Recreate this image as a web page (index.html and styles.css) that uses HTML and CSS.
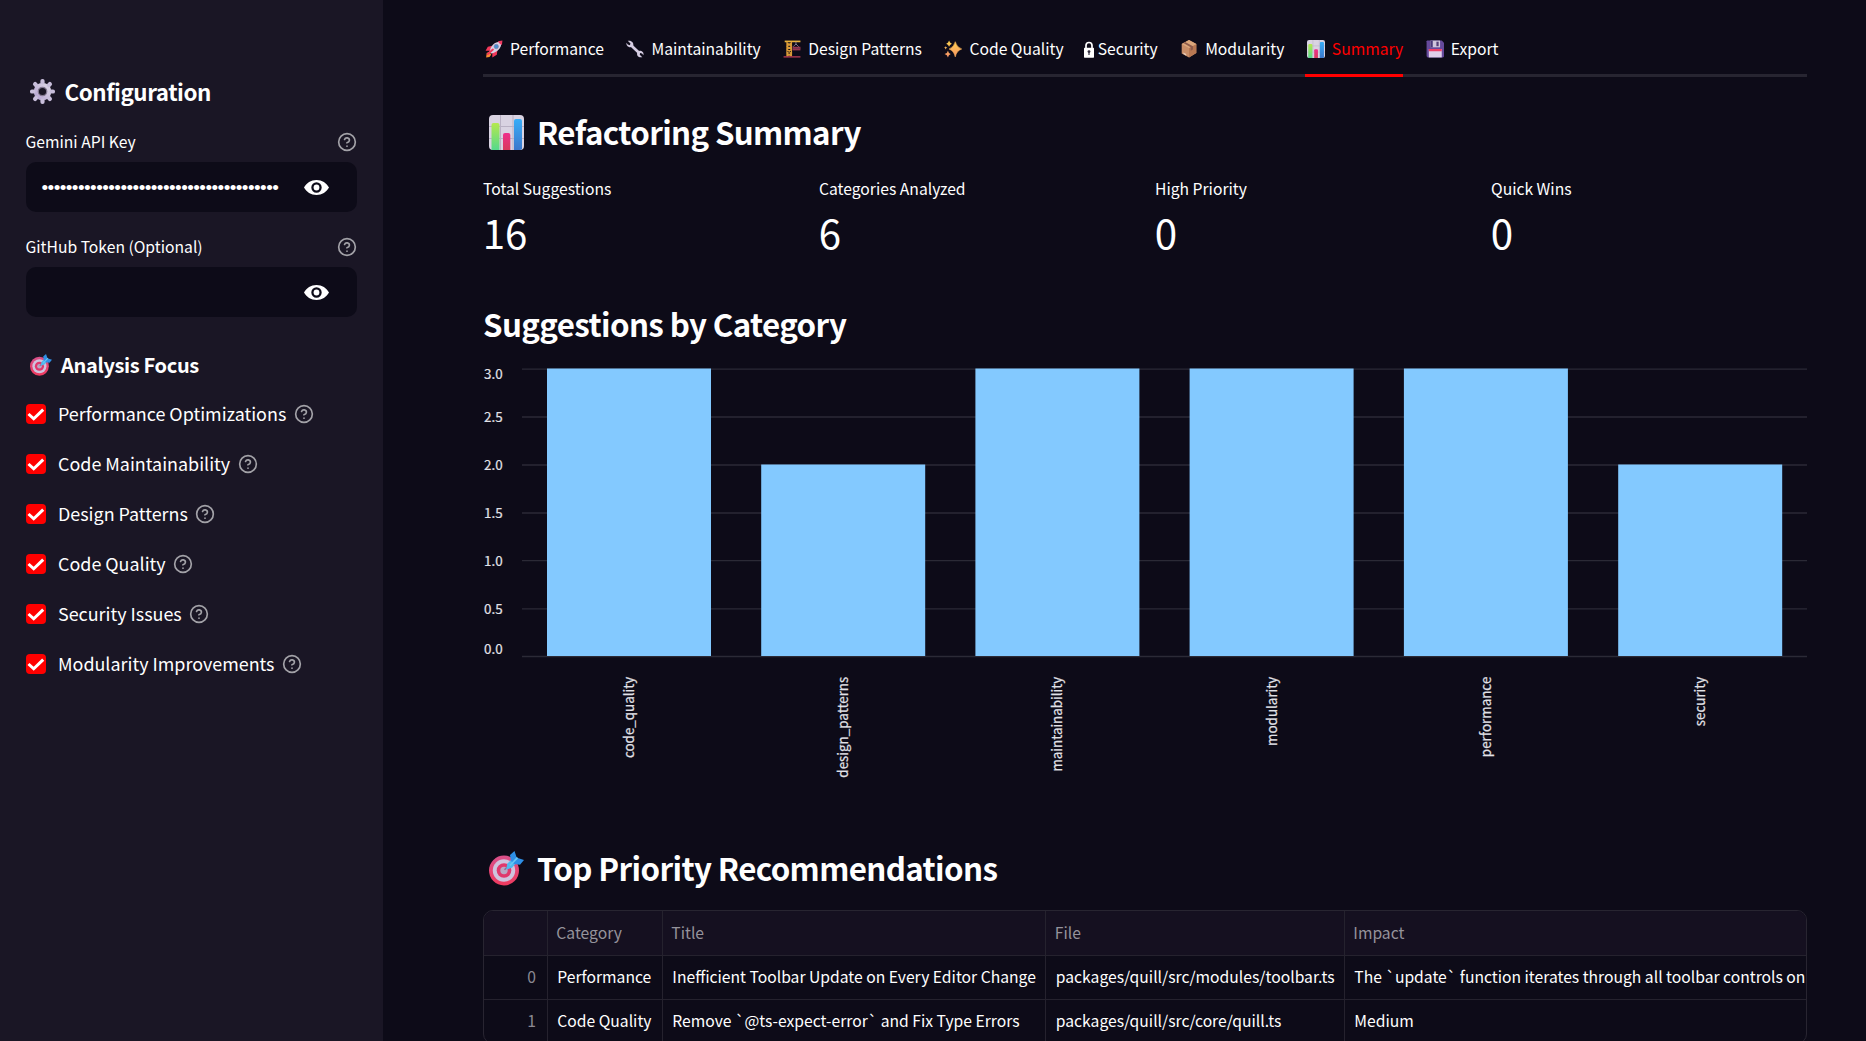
FILE: index.html
```html
<!DOCTYPE html>
<html lang="en">
<head>
<meta charset="utf-8">
<title>Refactoring Summary</title>
<link rel="stylesheet" href="styles.css">
</head>
<body>
<svg class="defs" width="0" height="0" aria-hidden="true">
  <defs>
    <linearGradient id="gGreen" x1="0" y1="0" x2="0" y2="1"><stop offset="0" stop-color="#b5e84e"/><stop offset="1" stop-color="#55d98c"/></linearGradient>
    <linearGradient id="gPink" x1="0" y1="0" x2="0" y2="1"><stop offset="0" stop-color="#ee2f8c"/><stop offset="1" stop-color="#d83a5c"/></linearGradient>
    <linearGradient id="gBlue" x1="0" y1="0" x2="0" y2="1"><stop offset="0" stop-color="#38adf8"/><stop offset="1" stop-color="#3c78cc"/></linearGradient>
    <linearGradient id="gGear" x1="1" y1="0" x2="0" y2="1"><stop offset="0" stop-color="#dcd6e6"/><stop offset="1" stop-color="#b7a6d2"/></linearGradient>
    <linearGradient id="gStar" x1="0" y1="0" x2="0" y2="1"><stop offset="0" stop-color="#fdd34e"/><stop offset="1" stop-color="#f79068"/></linearGradient>
    <linearGradient id="gRing" x1="0" y1="0" x2="0" y2="1"><stop offset="0" stop-color="#d9508a"/><stop offset="1" stop-color="#ef3a5e"/></linearGradient>
  </defs>
  <symbol id="help" viewBox="0 0 24 24"><g fill="none" stroke="currentColor" stroke-width="2" stroke-linecap="round" stroke-linejoin="round"><circle cx="12" cy="12" r="10"/><path d="M9.09 9a3 3 0 0 1 5.83 1c0 2-3 3-3 3"/><path d="M12 17h.01"/></g></symbol>
  <symbol id="eye" viewBox="0 0 25 15"><path fill="#fff" fill-rule="evenodd" d="M0 7.500C2.400 3 7 0 12.500 0S22.600 3 25 7.500C22.600 12 18 15 12.500 15S2.400 12 0 7.500ZM12.500 2.300a5.200 5.200 0 1 0 0 10.400a5.200 5.200 0 0 0 0-10.400Z"/><circle cx="12.500" cy="7.500" r="2.900" fill="#fff"/></symbol>
  <symbol id="check" viewBox="0 0 20 20"><path d="M2.500 10 7.700 14.800 17.200 5.600" fill="none" stroke="#fff" stroke-width="3"/></symbol>
  <symbol id="gear" viewBox="0 0 32 32"><g stroke="url(#gGear)" fill="none"><circle cx="16" cy="16" r="8" stroke-width="6.500"/></g><g fill="#c8bedb"><rect x="13.300" y="0" width="5.400" height="7" rx="2.500"/><rect x="13.300" y="25" width="5.400" height="7" rx="2.500"/><rect x="0" y="13.300" width="7" height="5.400" rx="2.500"/><rect x="25" y="13.300" width="7" height="5.400" rx="2.500"/><g transform="rotate(45 16 16)"><rect x="13.300" y="0" width="5.400" height="7" rx="2.500"/><rect x="13.300" y="25" width="5.400" height="7" rx="2.500"/><rect x="0" y="13.300" width="7" height="5.400" rx="2.500"/><rect x="25" y="13.300" width="7" height="5.400" rx="2.500"/></g></g><circle cx="16" cy="16" r="5.400" fill="#1a1625" stroke="#837991" stroke-width="1.600"/></symbol>
  <symbol id="target" viewBox="0 0 35 35"><circle cx="15" cy="19.500" r="15" fill="url(#gRing)"/><circle cx="15" cy="19.500" r="11.200" fill="#cfc3dd"/><circle cx="15" cy="19.500" r="7.300" fill="#e0386c"/><circle cx="15" cy="19.500" r="3.700" fill="#b9a8c4"/><path d="M15.500 18.800 24 10.500" stroke="#8a6d9c" stroke-width="1.600"/><path d="M17.300 18.500 18.200 12.800 24.500 6.500 28.500 10.500 23 16.800Z" fill="#4fb9ee"/><path d="M22 10 21 4 25.500 0 27.500 6 28.800 7 35 9 31 13.800 25 13Z" fill="#2e8fe6"/><path d="M21 14.500 28.500 6.600" stroke="#65c6f5" stroke-width="1.800"/></symbol>
  <symbol id="chart" viewBox="0 0 35 35"><rect width="35" height="35" rx="4" fill="#d9d3e2"/><path d="M0 11.500H35M0 23.500H35M11.500 0V35M24 0V35" stroke="#b9b1c4" stroke-width="1"/><path d="M2.500 35V10a2 2 0 0 1 2-2h4a2 2 0 0 1 2 2v25Z" fill="url(#gGreen)"/><path d="M14 35V20a2 2 0 0 1 2-2h3.300a2 2 0 0 1 2 2v15Z" fill="url(#gPink)"/><path d="M25 35V6a2 2 0 0 1 2-2h4a2 2 0 0 1 2 2v28Q32 35 31 35Z" fill="url(#gBlue)"/></symbol>
  <symbol id="rocket" viewBox="0 0 32 32"><path d="M13 10 5 12 1 19 9 19ZM22 18 21 26 13 31 13 22Z" fill="#f2385a"/><path d="M2 31 3 23 8 21 11 26 8 30Z" fill="#fb8b32"/><path d="M8 21C10 10 17 3 27 3L29 5C29 15 22 22 11 24Z" fill="#d9d1e4"/><path d="M23 2 31 1 30 9C28 8 24 5 23 2Z" fill="#ef3b62"/><circle cx="20" cy="11.500" r="4" fill="#4a90d0" stroke="#8577a0" stroke-width="1"/><path d="M5 25 14 17" stroke="#f2385a" stroke-width="3.500" stroke-linecap="round"/></symbol>
  <symbol id="wrench" viewBox="0 0 32 32"><path d="M8 8.500 24 23.500" stroke="#d5cde2" stroke-width="5"/><path d="M3 1.500 8 6 7 9.500 3 8 1 5C0 9 3 13 8 13L13 10C14 5 10 0 3 1.500ZM29 30.500 24.500 26 25 23 28.500 24 31 27C32 22 29 19 24 19L20 22.500C18.500 27 22 32 29 30.500Z" fill="#d5cde2"/></symbol>
  <symbol id="crane" viewBox="0 0 32 32"><path d="M3 2.500H31" stroke="#e9b23c" stroke-width="3"/><path d="M7 3V29M15 3V29M7 5 15 11 7 17 15 23 7 29M15 5 7 11 15 17 7 23 15 29" stroke="#d99a37" stroke-width="2.200" fill="none"/><path d="M23 3V9M23 7 18 12M23 7 28 12" stroke="#9d93ad" stroke-width="1.300" fill="none"/><path d="M17 12H31V18.500H17Z" fill="#963650"/><path d="M17 15H31" stroke="#60304b" stroke-width="1"/><path d="M1 30H31" stroke="#b33a55" stroke-width="2.400"/></symbol>
  <symbol id="sparkles" viewBox="0 0 32 32"><g fill="url(#gStar)"><path d="M20 3Q22.500 13 31.500 16Q22.500 19 20 30Q17.500 19 9 16Q17.500 13 20 3Z" stroke="#fbb356" stroke-width="1"/><path d="M9 1Q10 5 14 6.500Q10 8 9 12Q8 8 4 6.500Q8 5 9 1ZM7 19Q8 24 12 25Q8 26 7 31Q6 26 1 25Q6 24 7 19ZM3 11Q3.500 13 6 13.500Q3.500 14 3 17Q2.500 14 0 13.500Q2.500 13 3 11Z"/></g></symbol>
  <symbol id="lock" viewBox="0 0 10 17"><path d="M2 8V4.500a3 3 0 0 1 6 0V8" fill="none" stroke="#fff" stroke-width="1.700"/><rect y="6.700" width="10" height="10" rx=".6" fill="#fff"/><circle cx="5" cy="10.600" r="1.400" fill="#302c3c"/><path d="M5 11V14" stroke="#302c3c" stroke-width="1.200"/></symbol>
  <symbol id="package" viewBox="0 0 28 32"><path d="M14 0 27 7V23L14 31 1 24V7Z" fill="#c98e68"/><path d="M14 14 27 7V23L14 31Z" fill="#b87852"/><path d="M14 0 27 7 14 14 1 7Z" fill="#dba77b"/><path d="M7 3.500 21 11V17L17 19V13L4 5.500Z" fill="#8e5b4b"/><path d="M4 22 9 25V28L4 25Z" fill="#e8cdbb"/></symbol>
  <symbol id="floppy" viewBox="0 0 32 32"><path d="M2 1H28L32 5V29a2 2 0 0 1-2 2H3L1 29V2Z" fill="#65499b"/><rect x="8" y="1" width="17" height="12" fill="#cfc5dd"/><rect x="18.500" y="3" width="4" height="8" fill="#554078"/><path d="M8 1h4v12H8Z" fill="#493879"/><path d="M5 16H28V31H5Z" fill="#dfd0ea"/><path d="M5 16H28V20H5Z" fill="#ee4168"/></symbol>
</svg>

<div class="app">
  <aside class="sidebar">
    <h2 class="side-title"><svg class="ic-gear"><use href="#gear"/></svg><span>Configuration</span></h2>
    <div class="field">
      <div class="field-label"><span>Gemini API Key</span><svg class="help"><use href="#help"/></svg></div>
      <div class="field-box"><span class="dots">•••••••••••••••••••••••••••••••••••••••</span><svg class="eye"><use href="#eye"/></svg></div>
    </div>
    <div class="field">
      <div class="field-label"><span>GitHub Token (Optional)</span><svg class="help"><use href="#help"/></svg></div>
      <div class="field-box"><span class="dots"></span><svg class="eye"><use href="#eye"/></svg></div>
    </div>
    <h3 class="focus-title"><svg class="ic-focus"><use href="#target"/></svg><span>Analysis Focus</span></h3>
    <ul class="checks">
      <li><svg class="box"><use href="#check"/></svg><span>Performance Optimizations</span><svg class="help"><use href="#help"/></svg></li>
      <li><svg class="box"><use href="#check"/></svg><span>Code Maintainability</span><svg class="help"><use href="#help"/></svg></li>
      <li><svg class="box"><use href="#check"/></svg><span>Design Patterns</span><svg class="help"><use href="#help"/></svg></li>
      <li><svg class="box"><use href="#check"/></svg><span>Code Quality</span><svg class="help"><use href="#help"/></svg></li>
      <li><svg class="box"><use href="#check"/></svg><span>Security Issues</span><svg class="help"><use href="#help"/></svg></li>
      <li><svg class="box"><use href="#check"/></svg><span>Modularity Improvements</span><svg class="help"><use href="#help"/></svg></li>
    </ul>
  </aside>

  <main class="main">
    <nav class="tabs">
      <a class="tab"><svg><use href="#rocket"/></svg><span>Performance</span></a>
      <a class="tab"><svg><use href="#wrench"/></svg><span>Maintainability</span></a>
      <a class="tab"><svg><use href="#crane"/></svg><span>Design Patterns</span></a>
      <a class="tab"><svg><use href="#sparkles"/></svg><span>Code Quality</span></a>
      <a class="tab tab-lock"><svg><use href="#lock"/></svg><span>Security</span></a>
      <a class="tab"><svg><use href="#package"/></svg><span>Modularity</span></a>
      <a class="tab active"><svg><use href="#chart"/></svg><span>Summary</span></a>
      <a class="tab"><svg><use href="#floppy"/></svg><span>Export</span></a>
    </nav>

    <h1 class="heading heading-summary"><svg><use href="#chart"/></svg><span>Refactoring Summary</span></h1>

    <section class="metrics">
      <div><p class="metric-label">Total Suggestions</p><p class="metric-value">16</p></div>
      <div><p class="metric-label">Categories Analyzed</p><p class="metric-value">6</p></div>
      <div><p class="metric-label">High Priority</p><p class="metric-value">0</p></div>
      <div><p class="metric-label">Quick Wins</p><p class="metric-value">0</p></div>
    </section>

    <h1 class="heading heading-chart"><span>Suggestions by Category</span></h1>

    <svg class="chart" width="1324" height="440" viewBox="483 350 1324 440">
      <g class="grid">
        <path d="M522 369.200H1807M522 417H1807M522 465H1807M522 513H1807M522 560.700H1807M522 608.800H1807M522 656.500H1807"/>
      </g>
      <g class="bars">
        <rect x="547" y="368.500" width="164" height="287.500"/>
        <rect x="761.200" y="464.500" width="164" height="191.500"/>
        <rect x="975.400" y="368.500" width="164" height="287.500"/>
        <rect x="1189.600" y="368.500" width="164" height="287.500"/>
        <rect x="1403.900" y="368.500" width="164" height="287.500"/>
        <rect x="1618.200" y="464.500" width="164" height="191.500"/>
      </g>
      <g class="axis" text-anchor="end">
        <text x="502.700" y="379">3.0</text>
        <text x="502.700" y="422">2.5</text>
        <text x="502.700" y="470">2.0</text>
        <text x="502.700" y="518">1.5</text>
        <text x="502.700" y="566">1.0</text>
        <text x="502.700" y="614">0.5</text>
        <text x="502.700" y="654">0.0</text>
        <text transform="translate(634 676.700) rotate(-90)">code_quality</text>
        <text transform="translate(848 676.700) rotate(-90)">design_patterns</text>
        <text transform="translate(1062 676.700) rotate(-90)">maintainability</text>
        <text transform="translate(1277 676.700) rotate(-90)">modularity</text>
        <text transform="translate(1491 676.700) rotate(-90)">performance</text>
        <text transform="translate(1705 676.700) rotate(-90)">security</text>
      </g>
    </svg>

    <h1 class="heading heading-top"><svg><use href="#target"/></svg><span>Top Priority Recommendations</span></h1>

    <div class="table">
      <div class="row head"><div></div><div>Category</div><div>Title</div><div>File</div><div>Impact</div></div>
      <div class="row"><div class="idx">0</div><div>Performance</div><div>Inefficient Toolbar Update on Every Editor Change</div><div>packages/quill/src/modules/toolbar.ts</div><div>The `update` function iterates through all toolbar controls on</div></div>
      <div class="row"><div class="idx">1</div><div>Code Quality</div><div>Remove `@ts-expect-error` and Fix Type Errors</div><div>packages/quill/src/core/quill.ts</div><div>Medium</div></div>
    </div>
  </main>
</div>
</body>
</html>
```
FILE: styles.css
```css
* { box-sizing: border-box; }
body {
  margin: 0;
  height: 1041px;
  overflow: hidden;
  background: #0d0b18;
  color: #fff;
  font-family: "Noto Sans CJK SC", "Noto Sans", sans-serif;
  font-size: 15.68px;
}
h1, h2, h3, p, ul { margin: 0; padding: 0; }
svg { display: block; flex: none; }
.defs { position: absolute; }

.app { display: flex; height: 1041px; }

/* Sidebar */
.sidebar {
  width: 383px;
  flex: none;
  padding: 71px 26px 0;
  background: #1a1625;
}
.side-title {
  display: flex;
  align-items: center;
  height: 40px;
  padding-left: 4px;
  gap: 9.5px;
  font-size: 22.4px;
  font-weight: 600;
  letter-spacing: -0.45px;
}
.side-title span { padding-bottom: 1px; }
.field-label span { padding-bottom: 2px; }
.ic-gear { width: 25px; height: 25px; }
.field { padding-top: 16px; }
.field + .field { padding-top: 20px; }
.field-label {
  display: flex;
  justify-content: space-between;
  align-items: center;
  height: 30px;
}
.field-label span { margin-left: -0.5px; }
.help { width: 20px; height: 20px; color: #a3a2a8; }
.field-box {
  display: flex;
  align-items: center;
  justify-content: space-between;
  height: 50px;
  margin-top: 5px;
  padding: 0 28px 0 15.5px;
  border-radius: 10px;
  background: #0d0b18;
}
.dots {
  padding-top: 2px;
  font-family: "Liberation Sans", Arial, sans-serif;
  font-size: 19px;
  letter-spacing: -0.58px;
}
.eye { width: 25px; height: 15px; }
.focus-title {
  display: flex;
  align-items: center;
  gap: 9px;
  height: 30px;
  margin-top: 33px;
  padding-left: 4px;
  font-size: 20px;
  font-weight: 600;
  letter-spacing: -0.34px;
}
.focus-title span { padding-bottom: 1px; }
.ic-focus { width: 22px; height: 22px; }
.checks { list-style: none; margin-top: 9px; }
.checks li {
  display: flex;
  align-items: center;
  height: 50px;
  font-size: 17.92px;
}
.checks span { padding-bottom: 2px; }
.box { width: 20px; height: 20px; margin-right: 12px; border-radius: 4px; background: #f00; }
.checks .help { margin-left: 7.5px; }

/* Main column */
.main { width: 1424px; padding: 24px 0 0 100px; }
.tabs {
  display: flex;
  gap: 20.5px;
  width: 1324px;
  height: 53px;
  border-bottom: 3px solid #272531;
}
.tab {
  display: flex;
  align-items: center;
  height: 53px;
  padding: 0 0 3px 2px;
}
.tab span { padding-bottom: 2px; }
.tab svg { width: 18px; height: 18px; margin-right: 7px; }
.tab-lock { margin-left: -2.5px; }
.tab-lock svg { width: 10px; height: 17px; margin-right: 4px; }
.tab.active { color: #f00; border-bottom: 3px solid #f00; padding-bottom: 0; }

.heading {
  display: flex;
  align-items: center;
  width: 1324px;
  height: 46px;
  font-size: 31.3px;
  font-weight: 600;
  letter-spacing: -0.62px;
  white-space: nowrap;
}
.heading span { padding-bottom: 1px; }
.heading svg { width: 35px; height: 35px; margin: 0 13px 0 6px; }
.heading-summary { margin-top: 32px; letter-spacing: -0.65px; }
.heading-chart { margin-top: 41px; }
.heading-top { margin-top: 55px; }

.metrics {
  display: grid;
  grid-template-columns: repeat(4, 316px);
  gap: 20px;
  margin-top: 19px;
}
.metric-label { height: 30px; line-height: 30px; }
.metric-value { height: 56px; line-height: 56px; font-size: 40.3px; text-indent: -0.3px; }

.chart { margin-top: 3px; }
.grid path { stroke: #2b2a36; stroke-width: 1.3; }
.bars rect { fill: #83c9ff; }
.axis text { fill: #e2e2e8; stroke: #e2e2e8; stroke-width: 0.2px; font-size: 13.4px; }

.table {
  width: 1324px;
  height: 134px;
  margin-top: 19px;
  border: 1px solid #282531;
  border-radius: 10px;
  overflow: hidden;
}
.row {
  display: grid;
  grid-template-columns: 63.5px 115px 383.5px 298.5px 1fr;
  height: 43.5px;
  line-height: 42px;
  border-bottom: 1px solid #25222e;
  white-space: nowrap;
}
.row > div { padding-left: 9.8px; overflow: hidden; border-right: 1px solid #25222e; }
.row > div:last-child { border-right: 0; }
.row > .idx { padding-right: 10.5px; text-align: right; color: #8b8992; }
.head { height: 45px; line-height: 44px; background: #151020; color: #95939b; }
.head > div { padding-left: 8.8px; }
```
